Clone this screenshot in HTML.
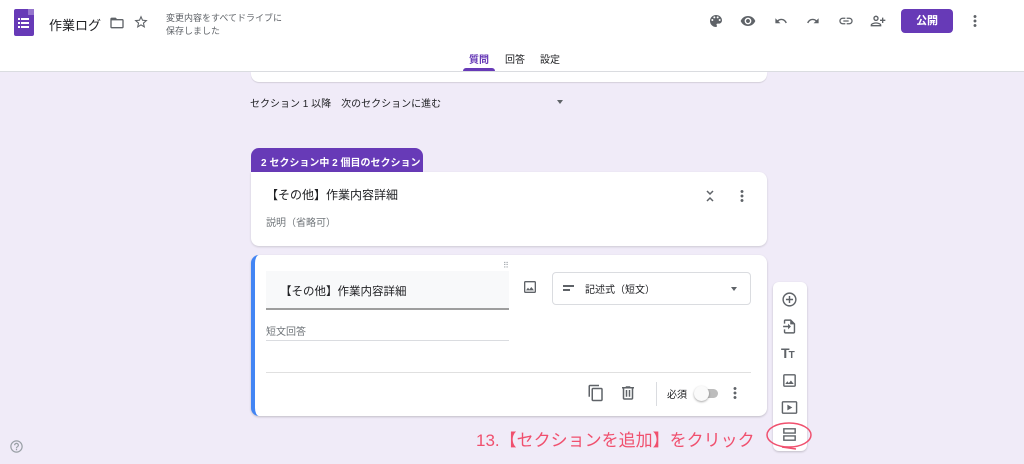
<!DOCTYPE html>
<html><head><meta charset="utf-8"><style>
*{box-sizing:border-box;margin:0;padding:0}
body{width:1024px;height:464px;overflow:hidden;background:#f0ebf8;font-family:"Liberation Sans","Noto Sans CJK JP",sans-serif;position:relative;color:#202124}
.a{position:absolute}
svg{display:block}
.ic{fill:#5f6368}
</style></head><body>
<div class="a" style="left:0;top:0;width:1024px;height:72px;background:#fff;border-bottom:1px solid #dadce0"></div>
<div class="a" style="left:14px;top:9px;width:20px;height:27px;background:#673ab7;border-radius:2px"></div>
<div class="a" style="left:28px;top:9px;width:6px;height:6px;background:#9575cd"></div>
<svg class="a" style="left:18px;top:17px" width="12" height="12"><g fill="#fff"><rect x="0" y="1" width="2" height="2"/><rect x="3" y="1" width="8" height="2"/><rect x="0" y="5" width="2" height="2"/><rect x="3" y="5" width="8" height="2"/><rect x="0" y="9" width="2" height="2"/><rect x="3" y="9" width="8" height="2"/></g></svg>
<div class="a" style="left:49px;top:15px;font-size:13px">作業ログ</div>
<svg class="a" style="left:109px;top:15px" width="16" height="16" viewBox="0 0 24 24"><path class="ic" d="M20 6h-8l-2-2H4c-1.1 0-2 .9-2 2v12c0 1.1.9 2 2 2h16c1.1 0 2-.9 2-2V8c0-1.1-.9-2-2-2zm0 12H4V8h16v10z"/></svg>
<svg class="a" style="left:133px;top:14px" width="16" height="16" viewBox="0 0 24 24"><path class="ic" d="M22 9.24l-7.19-.62L12 2 9.19 8.63 2 9.24l5.46 4.73L5.82 21 12 17.27 18.18 21l-1.63-7.03L22 9.24zM12 15.4l-3.76 2.27 1-4.28-3.32-2.88 4.38-.38L12 6.1l1.71 4.04 4.38.38-3.32 2.88 1 4.28L12 15.4z"/></svg>
<div class="a" style="left:166px;top:12px;font-size:9px;color:#5f6368;line-height:13px">変更内容をすべてドライブに<br>保存しました</div>
<svg class="a" style="left:708px;top:13px" width="16" height="16" viewBox="0 0 24 24"><path class="ic" d="M12 3a9 9 0 000 18c.83 0 1.5-.67 1.5-1.5 0-.39-.15-.74-.39-1.01-.23-.26-.38-.61-.38-.99 0-.83.67-1.5 1.5-1.5H16c2.76 0 5-2.24 5-5 0-4.42-4.03-8-9-8zm-5.5 9a1.5 1.5 0 110-3 1.5 1.5 0 010 3zm3-4a1.5 1.5 0 110-3 1.5 1.5 0 010 3zm5 0a1.5 1.5 0 110-3 1.5 1.5 0 010 3zm3 4a1.5 1.5 0 110-3 1.5 1.5 0 010 3z"/></svg>
<svg class="a" style="left:740px;top:13px" width="16" height="16" viewBox="0 0 24 24"><path class="ic" d="M12 4.5C7 4.5 2.730 7.61 1 12c1.73 4.39 6 7.5 11 7.5s9.27-3.11 11-7.5c-1.73-4.39-6-7.5-11-7.5zM12 17c-2.76 0-5-2.240-5-5s2.24-5 5-5 5 2.24 5 5-2.24 5-5 5zm0-8c-1.66 0-3 1.34-3 3s1.34 3 3 3 3-1.34 3-3-1.34-3-3-3z"/></svg>
<svg class="a" style="left:772px;top:12px" width="18" height="18" viewBox="0 0 24 24"><path class="ic" d="M12.5 8c-2.65 0-5.05 1-6.9 2.6L2 7v9h9l-3.62-3.62A7.9 7.9 0 0112.5 10.5c3.54 0 6.55 2.31 7.6 5.5l2.37-.78C21.08 11.03 17.15 8 12.5 8z" transform="scale(0.75) translate(4,4)"/></svg>
<svg class="a" style="left:804px;top:12px" width="18" height="18" viewBox="0 0 24 24"><path class="ic" d="M18.4 10.6C16.55 9 14.15 8 11.5 8c-4.65 0-8.58 3.03-9.96 7.22L3.9 16c1.05-3.19 4.05-5.5 7.6-5.5 1.95 0 3.73.72 5.12 1.880L13 16h9V7l-3.6 3.6z" transform="scale(0.75) translate(4,4)"/></svg>
<svg class="a" style="left:838px;top:13px" width="16" height="16" viewBox="0 0 24 24"><path class="ic" d="M3.9 12c0-1.71 1.39-3.1 3.1-3.1h4V7H7c-2.76 0-5 2.24-5 5s2.24 5 5 5h4v-1.9H7c-1.71 0-3.1-1.39-3.1-3.1zM8 13h8v-2H8v2zm9-6h-4v1.9h4c1.71 0 3.1 1.39 3.1 3.1s-1.39 3.1-3.1 3.1h-4V17h4c2.76 0 5-2.24 5-5s-2.24-5-5-5z"/></svg>
<svg class="a" style="left:870px;top:13px" width="16" height="16" viewBox="0 0 24 24"><path class="ic" d="M15 12c2.21 0 4-1.79 4-4s-1.79-4-4-4-4 1.79-4 4 1.79 4 4 4zm0-6c1.1 0 2 .9 2 2s-.9 2-2 2-2-.9-2-2 .9-2 2-2zm0 8c-2.67 0-8 1.34-8 4v2h16v-2c0-2.66-5.33-4-8-4zm-6 4c.22-.72 3.31-2 6-2 2.7 0 5.8 1.29 6 2H9zM6 15v-3h3v-2H6V7H4v3H1v2h3v3z" transform="translate(24,0) scale(-1,1)"/></svg>
<div class="a" style="left:901px;top:9px;width:52px;height:24px;background:#673ab7;border-radius:4px;color:#fff;font-size:11px;font-weight:bold;text-align:center;line-height:24px">公開</div>
<svg class="a" style="left:966px;top:12px" width="18" height="18" viewBox="0 0 24 24"><path class="ic" d="M12 8c1.1 0 2-.9 2-2s-.9-2-2-2-2 .9-2 2 .9 2 2 2zm0 2c-1.1 0-2 .9-2 2s.9 2 2 2 2-.9 2-2-.9-2-2-2zm0 6c-1.1 0-2 .9-2 2s.9 2 2 2 2-.9 2-2-.9-2-2-2z"/></svg>
<div class="a" style="left:469px;top:51px;font-size:10px;color:#673ab7;font-weight:bold">質問</div>
<div class="a" style="left:463px;top:68px;width:32px;height:3px;background:#673ab7;border-radius:3px 3px 0 0"></div>
<div class="a" style="left:505px;top:51px;font-size:10px;color:#202124">回答</div>
<div class="a" style="left:540px;top:51px;font-size:10px;color:#202124">設定</div>
<div class="a" style="left:251px;top:72px;width:516px;height:10px;background:#fff;border-radius:0 0 8px 8px;box-shadow:0 1px 1px rgba(0,0,0,.12)"></div>
<div class="a" style="left:250px;top:95px;font-size:10px;color:#202124">セクション 1 以降　次のセクションに進む</div>
<div class="a" style="left:557px;top:100px;border:3.5px solid transparent;border-top:4px solid #5f6368"></div>
<div class="a" style="left:251px;top:148px;width:172px;height:25px;background:#673ab7;border-radius:8px 8px 0 0;color:#fff;font-size:10px;font-weight:bold;padding:6px 0 0 10px">2 セクション中 2 個目のセクション</div>
<div class="a" style="left:251px;top:172px;width:516px;height:74px;background:#fff;border-radius:0 8px 8px 8px;box-shadow:0 1px 2px rgba(0,0,0,.15)"></div>
<div class="a" style="left:266px;top:186px;font-size:12px">【その他】作業内容詳細</div>
<div class="a" style="left:266px;top:214px;font-size:10px;color:#70757a">説明（省略可）</div>
<svg class="a" style="left:704px;top:189px" width="12" height="14" viewBox="0 0 12 14"><path d="M3 2l3 3 3-3M3 12l3-3 3 3" stroke="#5f6368" stroke-width="1.5" fill="none"/></svg>
<svg class="a" style="left:733px;top:187px" width="18" height="18" viewBox="0 0 24 24"><path class="ic" d="M12 8c1.1 0 2-.9 2-2s-.9-2-2-2-2 .9-2 2 .9 2 2 2zm0 2c-1.1 0-2 .9-2 2s.9 2 2 2 2-.9 2-2-.9-2-2-2zm0 6c-1.1 0-2 .9-2 2s.9 2 2 2 2-.9 2-2-.9-2-2-2z"/></svg>
<div class="a" style="left:251px;top:255px;width:516px;height:161px;background:#fff;border-radius:8px;border-left:4px solid #4285f4;box-shadow:0 1px 2px rgba(0,0,0,.2)"></div>
<div class="a" style="left:503px;top:261px;font-size:8px;color:#9aa0a6;letter-spacing:-1px">⠿</div>
<div class="a" style="left:266px;top:271px;width:243px;height:39px;background:#f8f9fa;border-bottom:2px solid #9e9e9e"></div>
<div class="a" style="left:280px;top:283px;font-size:11.5px">【その他】作業内容詳細</div>
<div class="a" style="left:266px;top:323px;font-size:10px;color:#70757a">短文回答</div>
<div class="a" style="left:266px;top:340px;width:243px;height:1px;background:#dadce0"></div>
<div class="a" style="left:266px;top:372px;width:485px;height:1px;background:#e0e0e0"></div>
<svg class="a" style="left:522px;top:279px" width="16" height="16" viewBox="0 0 24 24"><path class="ic" d="M19 3H5c-1.1 0-2 .9-2 2v14c0 1.1.9 2 2 2h14c1.1 0 2-.9 2-2V5c0-1.1-.9-2-2-2zm0 16H5V5h14v14zm-5-7l-3 3.72L9 13l-3 4h12l-4-5z"/></svg>
<div class="a" style="left:552px;top:272px;width:199px;height:33px;border:1px solid #dadce0;border-radius:4px"></div>
<div class="a" style="left:563px;top:285px;width:11px;height:1.5px;background:#5f6368"></div>
<div class="a" style="left:563px;top:289px;width:7px;height:1.5px;background:#5f6368"></div>
<div class="a" style="left:585px;top:281px;font-size:10px">記述式（短文）</div>
<div class="a" style="left:731px;top:287px;border:3.5px solid transparent;border-top:4px solid #5f6368"></div>
<svg class="a" style="left:587px;top:384px" width="18" height="18" viewBox="0 0 24 24"><path class="ic" d="M16 1H4c-1.1 0-2 .9-2 2v14h2V3h12V1zm3 4H8c-1.1 0-2 .9-2 2v14c0 1.1.9 2 2 2h11c1.1 0 2-.9 2-2V7c0-1.1-.9-2-2-2zm0 16H8V7h11v14z"/></svg>
<svg class="a" style="left:619px;top:384px" width="18" height="18" viewBox="0 0 24 24"><path class="ic" d="M15 4V3H9v1H4v2h1v13c0 1.1.9 2 2 2h10c1.1 0 2-.9 2-2V6h1V4h-5zm2 15H7V6h10v13zM9 8h2v9H9zm4 0h2v9h-2z"/></svg>
<div class="a" style="left:656px;top:382px;width:1px;height:24px;background:#dadce0"></div>
<div class="a" style="left:667px;top:386px;font-size:10px">必須</div>
<div class="a" style="left:697px;top:389px;width:21px;height:9px;background:#bdbdbd;border-radius:5px"></div>
<div class="a" style="left:694px;top:386px;width:15px;height:15px;background:#fafafa;border-radius:50%;box-shadow:0 1px 2px rgba(0,0,0,.35)"></div>
<svg class="a" style="left:726px;top:384px" width="18" height="18" viewBox="0 0 24 24"><path class="ic" d="M12 8c1.1 0 2-.9 2-2s-.9-2-2-2-2 .9-2 2 .9 2 2 2zm0 2c-1.1 0-2 .9-2 2s.9 2 2 2 2-.9 2-2-.9-2-2-2zm0 6c-1.1 0-2 .9-2 2s.9 2 2 2 2-.9 2-2-.9-2-2-2z"/></svg>
<div class="a" style="left:773px;top:282px;width:34px;height:169px;background:#fff;border-radius:6px;box-shadow:0 1px 2px rgba(0,0,0,.2)"></div>
<svg class="a" style="left:781px;top:291px" width="17" height="17" viewBox="0 0 24 24"><path class="ic" d="M13 7h-2v4H7v2h4v4h2v-4h4v-2h-4V7zm-1-5C6.48 2 2 6.48 2 12s4.48 10 10 10 10-4.48 10-10S17.52 2 12 2zm0 18c-4.41 0-8-3.59-8-8s3.59-8 8-8 8 3.59 8 8-3.59 8-8 8z"/></svg>
<svg class="a" style="left:781px;top:318px" width="17" height="17" viewBox="0 0 24 24"><path class="ic" d="M14 2H6c-1.1 0-2 .9-2 2v4h2V4h7v5h5v11H6v-4H4v4c0 1.1.9 2 2 2h12c1.1 0 2-.9 2-2V8l-6-6zM10 16l4-4-4-4v3H3v2h7v3z"/></svg>
<div class="a" style="left:781px;top:345px;font-size:14px;font-weight:bold;color:#5f6368;letter-spacing:-1px">T<span style="font-size:10px">T</span></div>
<svg class="a" style="left:781px;top:372px" width="17" height="17" viewBox="0 0 24 24"><path class="ic" d="M19 3H5c-1.1 0-2 .9-2 2v14c0 1.1.9 2 2 2h14c1.1 0 2-.9 2-2V5c0-1.1-.9-2-2-2zm0 16H5V5h14v14zm-5-7l-3 3.72L9 13l-3 4h12l-4-5z"/></svg>
<svg class="a" style="left:781px;top:399px" width="17" height="17" viewBox="0 0 24 24"><path class="ic" d="M21 3H3c-1.1 0-2 .9-2 2v14c0 1.1.9 2 2 2h18c1.1 0 2-.9 2-2V5c0-1.1-.9-2-2-2zm0 16H3V5h18v14zM9 8v8l7-4z"/></svg>
<svg class="a" style="left:781px;top:426px" width="17" height="17" viewBox="0 0 24 24"><path d="M4 4h16v6H4zM4 14h16v6H4z" fill="none" stroke="#5f6368" stroke-width="2"/></svg>
<div class="a" style="left:476px;top:426px;font-size:17px;color:#f0506e;letter-spacing:0;white-space:nowrap">13.【セクションを追加】をクリック</div>
<svg class="a" style="left:764px;top:418px" width="60" height="36"><ellipse cx="25" cy="17" rx="22" ry="12" fill="none" stroke="#f0506e" stroke-width="1.5"/><path d="M18 29 l14 2" stroke="#f0506e" stroke-width="1.5"/></svg>
<svg class="a" style="left:9px;top:439px" width="15" height="15" viewBox="0 0 24 24"><path fill="#9aa0a6" d="M11 18h2v-2h-2v2zm1-16C6.48 2 2 6.48 2 12s4.48 10 10 10 10-4.48 10-10S17.52 2 12 2zm0 18c-4.41 0-8-3.590-8-8s3.59-8 8-8 8 3.59 8 8-3.59 8-8 8zm0-14c-2.21 0-4 1.79-4 4h2c0-1.1.9-2 2-2s2 .9 2 2c0 2-3 1.75-3 5h2c0-2.25 3-2.5 3-5 0-2.21-1.79-4-4-4z"/></svg>
</body></html>
